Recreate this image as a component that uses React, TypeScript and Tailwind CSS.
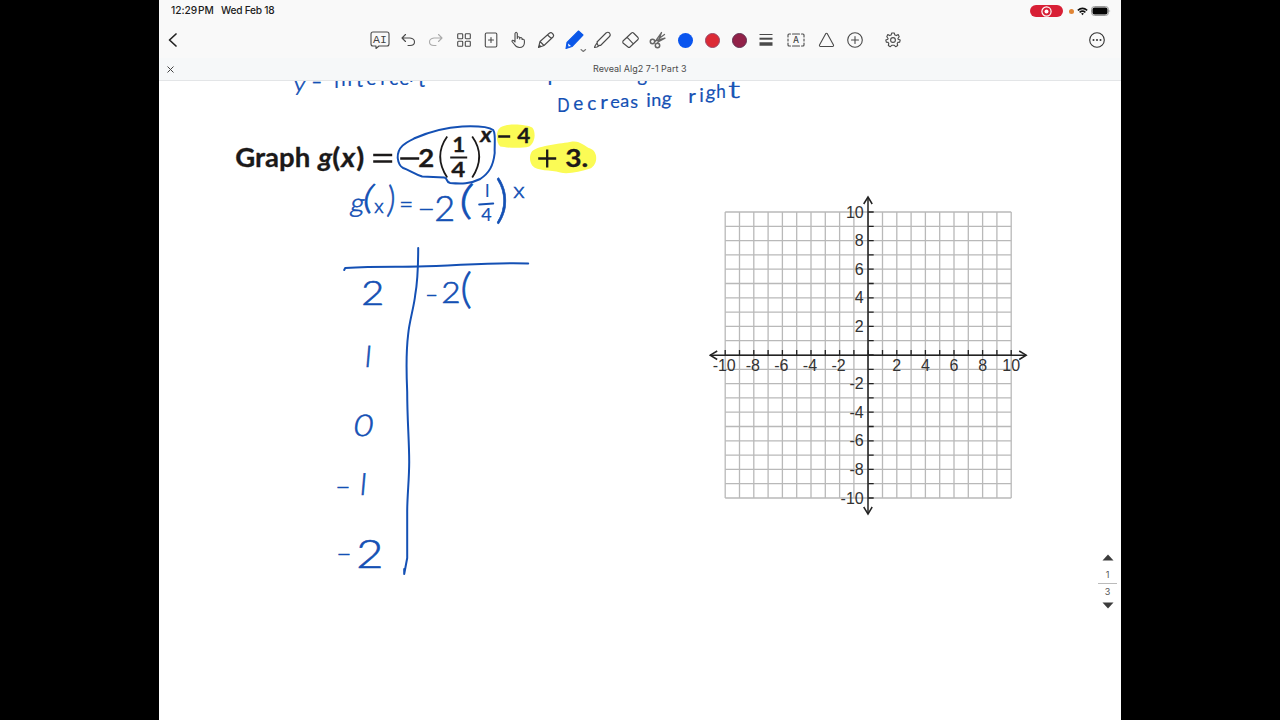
import type { ReactNode } from 'react'

const INK = '#1450b4'

type Glyph = { t: string; x: number; y: number; s: number; w?: number; r?: number }

// handwritten notes: t = text, x/y = baseline start, s = size, w = horizontal stretch, r = slant
const notes: Glyph[] = [
  { t: 'y', x: 293, y: 91, s: 21, w: 1.1, r: 6 },
  { t: '–', x: 311, y: 88, s: 19 },
  { t: 'i', x: 334, y: 88, s: 19 },
  { t: 'n', x: 341, y: 86, s: 19 },
  { t: 't', x: 356, y: 87, s: 19 },
  { t: 'e', x: 366, y: 85, s: 19 },
  { t: 'r', x: 380, y: 85, s: 19 },
  { t: 'c', x: 389, y: 85, s: 19 },
  { t: 'e', x: 399, y: 85, s: 19 },
  { t: 'p', x: 409, y: 79, s: 17 },
  { t: 't', x: 418, y: 87, s: 19 },
  { t: 'I', x: 547, y: 85, s: 19 },
  { t: 'ncreasin', x: 558, y: 80, s: 18 },
  { t: 'g', x: 637, y: 82, s: 19 },

  { t: 'D', x: 557, y: 112, s: 19, w: 0.85 },
  { t: 'e', x: 573, y: 110, s: 19 },
  { t: 'c', x: 587, y: 110, s: 19 },
  { t: 'r', x: 600, y: 109, s: 19, w: 1.1 },
  { t: 'e', x: 610, y: 108, s: 18 },
  { t: 'a', x: 620, y: 107, s: 18 },
  { t: 's', x: 630, y: 108, s: 18 },
  { t: 'i', x: 646, y: 107, s: 19 },
  { t: 'n', x: 651, y: 106, s: 18 },
  { t: 'g', x: 661, y: 105, s: 19, r: 6 },
  { t: 'r', x: 688, y: 103, s: 19, w: 1.1 },
  { t: 'i', x: 699, y: 102, s: 19 },
  { t: 'g', x: 705, y: 99, s: 19, r: 6 },
  { t: 'h', x: 716, y: 98, s: 19, w: 0.9 },
  { t: 't', x: 728, y: 98, s: 23, w: 1.5 },

  { t: 'g', x: 349, y: 212, s: 26, w: 1.05, r: 10 },
  { t: '(', x: 361, y: 209, s: 33, w: 1.3, r: 10 },
  { t: 'x', x: 374, y: 213, s: 20 },
  { t: ')', x: 386, y: 212, s: 36, w: 0.9, r: 4 },
  { t: '=', x: 399, y: 213, s: 24 },
  { t: '–', x: 417, y: 217, s: 26, w: 1.2 },
  { t: '2', x: 434, y: 221, s: 36 },
  { t: '(', x: 458, y: 214, s: 40, w: 1.4, r: 4 },
  { t: ')', x: 495, y: 217, s: 52, w: 1 },
  { t: 'x', x: 513, y: 198, s: 22, w: 1.1 },
  { t: '4', x: 481, y: 221, s: 18 },

  { t: '2', x: 361, y: 305, s: 33, w: 1.2 },
  { t: '–', x: 425, y: 302, s: 22 },
  { t: '2', x: 441, y: 303, s: 29, w: 1.15 },
  { t: '(', x: 460, y: 303, s: 41, w: 1.1 },
  { t: '0', x: 352.5, y: 436, s: 30, w: 1.1, r: 8 },
  { t: '–', x: 335, y: 494, s: 22, w: 1.2 },
  { t: '–', x: 336, y: 561, s: 22, w: 1.2 },
  { t: '2', x: 356, y: 568, s: 39, w: 1.2 },
]

// plain upstroke ones
const ones: Glyph[] = [
  { t: 'l', x: 485, y: 197, s: 17 },
  { t: 'l', x: 364, y: 367, s: 29, r: 5 },
  { t: 'l', x: 359, y: 495, s: 30, r: 5 },
]

function Note({ t, x, y, s, w = 1, r = 0 }: Glyph) {
  const light = s >= 20
  return (
    <text
      transform={`translate(${x} ${y}) skewX(${-r}) scale(${w} 1)`}
      fontSize={s}
      fontWeight={light ? 300 : 400}
      fill={INK}
      stroke={INK}
      strokeWidth={light ? 0.6 : 0.2}
      className="font-['Lato',sans-serif]"
    >
      {t}
    </text>
  )
}

function Printed({ t, x, y, w, s = 26, italic = false }: { t: string; x: number; y: number; w: number; s?: number; italic?: boolean }) {
  return (
    <text
      x={x}
      y={y}
      fontSize={s}
      fontWeight={700}
      textLength={w}
      lengthAdjust="spacingAndGlyphs"
      fontStyle={italic ? 'italic' : 'normal'}
      fill="#1b1919"
      stroke="#1b1919"
      strokeWidth={0.3}
      className="font-['Lato',sans-serif]"
    >
      {t}
    </text>
  )
}

function Problem() {
  return (
    <g>
      <g fill="#fbfb55">
        <path d="M500 127.500C507 122.500 527 124.500 532 127.500C536 132 535 143 529 146.500C520 149 505 147.500 500 146.500C496 142.500 495 131.500 500 127.500Z" />
        <path d="M532 151C540 145 560 144 572 141.500C580 140.500 584 146 590 148.500C598 151.500 598 164.500 590 168.500C580 171.500 568 174.500 560 172.500C550 169.500 537 171.500 532 165.500C529 161.500 529 154.500 532 151Z" />
      </g>
      <Printed t="Graph" x={235} y={166.5} w={75} />
      <Printed t="g" x={318} y={166.5} w={14} italic />
      <Printed t="(" x={332} y={166.5} w={8} />
      <Printed t="x" x={341} y={166.5} w={14} italic />
      <Printed t=")" x={356} y={166.5} w={8} />
      <Printed t="2" x={418} y={166.5} w={16} s={25} />
      <Printed t="1" x={452} y={152} w={13} s={21} />
      <Printed t="4" x={451} y={177} w={14} s={21} />
      <Printed t="x" x={480} y={142} w={11.5} s={20} italic />
      <Printed t="4" x={517} y={142.5} w={13} s={20} />
      <Printed t="3." x={565} y={166.5} w={23} s={25} />
      <g stroke="#1b1919" strokeWidth="2.300" fill="none">
        <path d="M373 155H392M373 161.500H392M400 158.500H419M498 136.500H510M538 158.500H556M547 149.500V167.500" />
        <path d="M450 157.500H467" strokeWidth="2" />
        <path d="M447 136.500Q433 156 447 177.500M472 136.500Q486 156 472 177.500" strokeWidth="1.800" />
      </g>
    </g>
  )
}

function Ink() {
  return (
    <g>
      {notes.map((n, i) => <Note key={i} {...n} />)}
      {ones.map((n, i) => <Note key={i} {...n} />)}
      <g fill="none" stroke={INK} strokeWidth="2" strokeLinecap="round" strokeLinejoin="round">
        <path d="M397.500 158C397 146 407 142 415 138C430 131.500 445 127.500 462 126.500C475 126 488 126.500 493 130C496 134 494 146 494.500 153C493 166 489 173 480 179C470 184 461 184 450 183C445 182 448 178 444 177.500L422 176.500C414 174 409 170 403 168C399 166 398 162 397.500 158Z" />
        <path d="M479 204.500L493 203.500" />
        <path d="M344 270L345 268C375 266 395 267 418 266.500C455 266 490 262 528 263.500" />
        <path d="M418 248C418 270 417 284 415 295C414 306 409 322 408 334C406 350 406 370 407 392C407 420 409 440 409 462C409 480 407 495 407 512V558L404 574L404 569" />
      </g>
    </g>
  )
}

const steps = Array.from({ length: 21 }, (_, i) => i - 10)
const STEP = 14.3
const CX = 868
const CY = 355

function CoordinateGrid() {
  return (
    <g>
      {steps.map((n) => (
        <path
          key={n}
          d={`M${CX + n * STEP} 212V498M725 ${CY + n * STEP}H1011`}
          stroke="#b9b9b9"
          strokeWidth="1.3"
        />
      ))}
      {steps.map((n) => (
        <path
          key={n}
          d={`M${CX + n * STEP} 350V355M868 ${CY + n * STEP}H873.500`}
          stroke="#222"
          strokeWidth="1.3"
        />
      ))}
      <g stroke="#222" strokeWidth="1.500" fill="none">
        <path d="M710 355.200H1026M867.800 197V514" />
        <path d="M717 351L710 355.200L717 359.500M1019 351L1026 355.200L1019 359.500M863.500 204L867.800 197L872 204M863.500 507L867.800 514L872 507" />
      </g>
      <g fontSize="16" fill="#333" className="font-['Liberation_Sans',sans-serif]">
        {steps.filter((n) => n % 2 === 0 && n !== 0).map((n) => (
          <g key={n}>
            <text x={CX + n * STEP - (n < 0 ? 1 : 0)} y={371} textAnchor="middle">{n}</text>
            <text x={863.5} y={CY - n * STEP + 5.5} textAnchor="end">{n}</text>
          </g>
        ))}
      </g>
    </g>
  )
}

function Icon({ children, className = 'w-[27.8px]' }: { children: ReactNode; className?: string }) {
  return (
    <span className={`flex shrink-0 justify-center ${className}`}>
      <svg
        width="22"
        height="22"
        viewBox="-11 -11 22 22"
        fill="none"
        stroke="#4a4a4a"
        strokeWidth="1.1"
        strokeLinecap="round"
        strokeLinejoin="round"
        className="overflow-visible"
      >
        {children}
      </svg>
    </span>
  )
}

function Dot({ className }: { className: string }) {
  return (
    <span className="flex w-[26.900px] shrink-0 justify-center">
      <span className={`size-[15px] rounded-full ${className}`} />
    </span>
  )
}

function StatusBar() {
  return (
    <div className="flex h-[22px] items-center pr-[10px] pl-[12px] text-[10.2px] font-medium text-[#1c1c1c]">
      <span className="w-[50px] tracking-[-0.05px] whitespace-nowrap">12:29<span className="ml-px">PM</span></span>
      <span className="tracking-[-0.25px] whitespace-nowrap">Wed Feb 18</span>
      <span className="ml-auto flex h-[12px] w-[33px] items-center justify-center rounded-full bg-[#d81f35]">
        <svg width="11" height="11" viewBox="0 0 11 11" fill="none" stroke="#fff" strokeWidth="1.2">
          <circle cx="5.5" cy="5.5" r="4.600" />
          <circle cx="5.5" cy="5.5" r="2" fill="#fff" stroke="none" />
        </svg>
      </span>
      <span className="ml-[6px] size-[5px] rounded-full bg-[#e08535]" />
      <svg className="ml-[3px]" width="11" height="9" viewBox="0 0 11 9" fill="none" stroke="#111" strokeWidth="1.5">
        <path d="M0.800 3.400Q5.500 -0.700 10.200 3.400M2.600 5.300Q5.500 2.900 8.400 5.300" />
        <path d="M4.100 6.600Q5.500 5.500 6.900 6.600L5.500 8.200Z" fill="#111" stroke="none" />
      </svg>
      <svg className="ml-[3px]" width="20" height="10" viewBox="0 0 20 10">
        <rect x="0.500" y="0.500" width="17" height="9" rx="3" fill="none" stroke="#999" />
        <rect x="1.500" y="1.500" width="15" height="7" rx="2" fill="#050505" />
        <path d="M18.500 3.500Q20 5 18.500 6.500Z" fill="#999" />
      </svg>
    </div>
  )
}

function Toolbar() {
  return (
    <div className="flex h-[36px] items-center">
      <Icon className="w-[28px]">
        <path d="M3 -6L-3.500 0L3 6" stroke="#222" strokeWidth="1.7" />
      </Icon>
      <div className="ml-[179.500px] flex items-center">
        <Icon>
          <path d="M-7 -8H7Q9 -8 9 -6V4Q9 6 7 6H-1L-4 8.500V6H-7Q-9 6 -9 4V-6Q-9 -8 -7 -8Z" />
          <text x="0" y="3" textAnchor="middle" fontSize="11.5" fill="#444" stroke="none" className="font-['Liberation_Mono',monospace]">AI</text>
        </Icon>
        <Icon><path d="M-2.500 -5.500L-6 -2L-2.500 1.500M-6 -2H2Q6.500 -1.500 6.500 2Q6.500 5.500 2 5.500H0" /></Icon>
        <Icon><path d="M2.500 -5.500L6 -2L2.500 1.500M6 -2H-2Q-6.500 -1.500 -6.500 2Q-6.500 5.500 -2 5.500H0" stroke="#aaa" /></Icon>
        <Icon>
          <rect x="-6.300" y="-6.300" width="5" height="5" rx="0.800" />
          <rect x="1.300" y="-6.300" width="5" height="5" rx="0.800" />
          <rect x="-6.300" y="1.300" width="5" height="5" rx="0.800" />
          <rect x="1.300" y="1.300" width="5" height="5" rx="0.800" />
        </Icon>
        <Icon>
          <rect x="-6.700" y="-7" width="11.500" height="14" rx="1.200" />
          <path d="M-1 -2.500V2.500M-3.500 0H1.500" />
        </Icon>
        <Icon>
          <path d="M-4 2V-6.500Q-2.800 -9 -1.700 -6.500V-1.500M-1.700 -2.500Q-0.500 -4 0.700 -2.500V-1M0.700 -2Q2.100 -3.200 3.100 -1.500V-0.500Q5.300 -1.500 5.400 1V3Q5 7.500 0.500 7.500Q-2.500 7.500 -4.500 4.500L-7 1.500Q-7 -0.500 -5 0.800L-4 2" />
        </Icon>
        <Icon>
          <path d="M-8.500 7.500L-7 1.500L2 -6.500Q4 -8.200 5.500 -6.500Q7.500 -4.500 6 -3L-3 5.500ZM-7 1.500L-3 5.500M0.500 -5L4.500 -1.500M-7.800 5L-6.300 6.500" />
        </Icon>
        <Icon>
          <path d="M-9 8.500L-8 2.500L3.500 -9L8 -5L-3 6.500Z" fill="#0b57e8" stroke="#0b57e8" />
          <path d="M-7 3.500L-4 6L-6.500 6.500Z" fill="#fff" stroke="none" />
          <path d="M6 9.500L8.300 11.500L10.600 9.500" stroke="#777" />
        </Icon>
        <Icon>
          <path d="M-6 2L3 -7Q5 -8.500 6.500 -7Q8 -5 6.500 -3.500L-2.500 5.500L-5.500 5ZM-6 2L-5.500 5M-5.500 2L-8 6L-8.500 7.500L-6 7L-3.500 5.500" />
        </Icon>
        <Icon>
          <path d="M-8 1L0.500 -7Q1.500 -8 2.500 -7L7 -2.500Q7.800 -1.500 7 -0.500L-1 7Q-2 8 -3 7L-8 3Q-8.500 2 -8 1ZM-4 -2.800L2.300 3.800" />
        </Icon>
        <Icon>
          <g stroke="#666">
            <circle cx="-5.500" cy="1.500" r="2.200" strokeWidth="1.500" />
            <circle cx="-0.500" cy="5.500" r="2.200" strokeWidth="1.500" />
            <path d="M-3.500 1L7 -1.800L0 1.800M-0.500 3.500L3.500 -7.500L-2.500 1.200M1 -1.500L6.500 -5.500" strokeWidth="1.300" />
          </g>
        </Icon>
        <Dot className="bg-[#0a55ee]" />
        <Dot className="border border-[#9a4565] bg-[#dc2a35]" />
        <Dot className="border border-[#613050] bg-[#922148]" />
        <Icon className="w-[27px]">
          <path d="M-6.500 -5.500H6.500" strokeWidth="1" strokeLinecap="butt" />
          <path d="M-6.500 -1.300H6.500" strokeWidth="2" strokeLinecap="butt" />
          <path d="M-6.500 4H6.500" strokeWidth="3.500" strokeLinecap="butt" />
        </Icon>
        <Icon className="w-[32px]">
          <path d="M-5.500 -6H-7Q-8 -6 -8 -5V-3M-8 -1V1M-8 3V5Q-8 6 -7 6H-5.500M5.500 -6H7Q8 -6 8 -5V-3M8 -1V1M8 3V5Q8 6 7 6H5.500M-3.500 -6H3.500M-3.500 6H3.500" />
          <text x="0" y="3" textAnchor="middle" fontSize="8.5" fill="#444" stroke="none" className="font-['Inter',sans-serif] font-medium">A</text>
        </Icon>
        <Icon className="w-[29px]"><path d="M-0.300 -6.300Q0.500 -7.300 1.300 -6.300L7.500 5Q7.800 6.300 6.500 6.500H-5.500Q-6.800 6.300 -6.500 5Z" /></Icon>
        <Icon className="w-[28px]">
          <circle r="7.300" />
          <path d="M-3.500 0H3.500M0 -3.500V3.500" />
        </Icon>
        <Icon className="w-[48px]">
          <path d="M-1.200 -7H1.200L1.900 -5L3.400 -4.400L5.200 -5.400L6.200 -3.300L4.900 -1.500L5.200 -0.800L7.200 0L6.600 2.300L4.800 2.400L4.200 3.500L4.700 5.500L2.700 6.700L1.200 5.300H-1.200L-2.700 6.700L-4.700 5.500L-4.200 3.500L-4.800 2.400L-6.600 2.300L-7.200 0L-5.200 -0.800L-4.900 -1.500L-6.200 -3.300L-5.200 -5.400L-3.400 -4.400L-1.900 -5Z" />
          <circle r="2.400" />
        </Icon>
      </div>
      <Icon className="mr-[11px] ml-auto w-[27px]">
        <circle r="7.300" stroke="#333" />
        <g fill="#333" stroke="none">
          <circle cx="-3.500" r="1" />
          <circle r="1" />
          <circle cx="3.500" r="1" />
        </g>
      </Icon>
    </div>
  )
}

function TabBar() {
  return (
    <div className="flex h-[23px] items-center border-b border-[#e3e5e7] bg-[#f6f8f9]">
      <svg className="ml-[7.500px]" width="7" height="7" viewBox="0 0 7 7" stroke="#444" strokeWidth="1">
        <path d="M0.500 0.500L6.500 6.500M6.500 0.500L0.500 6.500" />
      </svg>
      <span className="flex-1 pr-[15px] text-center text-[9px] text-[#4b4b4b]">Reveal Alg2 7-1 Part 3</span>
    </div>
  )
}

export default function App() {
  return (
    <div className="flex h-screen justify-center overflow-hidden bg-black font-['Inter',sans-serif]">
      <div className="relative flex w-[962px] flex-col bg-white">
        <header className="shrink-0 bg-[#f9f9f9]">
          <StatusBar />
          <Toolbar />
          <TabBar />
        </header>
        <main className="min-h-0 flex-1 overflow-hidden">
          <svg width="962" height="639" viewBox="158.800 81 962 639" className="block">
            <Problem />
            <CoordinateGrid />
            <Ink />
          </svg>
        </main>
        <div className="absolute top-[554px] right-[4px] flex w-[19px] flex-col items-center text-[9px] leading-[14px] text-[#555]">
          <svg width="12" height="7" viewBox="0 0 12 7"><path d="M6 0.500L11.500 6.500H0.500Z" fill="#3c3c3c" /></svg>
          <span className="mt-[7px]">1</span>
          <span className="my-px h-px w-full bg-[#bbb]" />
          <span>3</span>
          <svg className="mt-[3px]" width="12" height="7" viewBox="0 0 12 7"><path d="M6 6.500L11.500 0.500H0.500Z" fill="#3c3c3c" /></svg>
        </div>
      </div>
    </div>
  )
}
